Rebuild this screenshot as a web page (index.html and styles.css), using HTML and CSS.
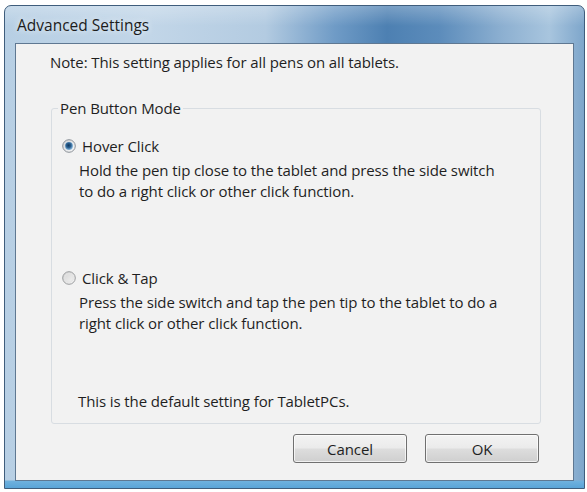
FILE: index.html
```html
<!DOCTYPE html>
<html>
<head>
<meta charset="utf-8">
<link rel="stylesheet" href="styles.css">
</head>
<body>
<div class="window">
  <div class="titlebar"><span class="title">Advanced Settings</span></div>
  <div class="client">
    <p class="note">Note: This setting applies for all pens on all tablets.</p>
    <fieldset class="group">
      <legend class="group-label">Pen Button Mode</legend>
      <div class="group-body">
        <div class="option">
          <div class="option-head">
            <svg class="radio" width="14" height="14" viewBox="0 0 14 14">
              <defs>
                <linearGradient id="rfill1" x1="0" y1="0" x2="1" y2="1">
                  <stop offset="0" stop-color="#cfd3d8"/>
                  <stop offset="1" stop-color="#fafafa"/>
                </linearGradient>
                <radialGradient id="rdot" cx="0.45" cy="0.42" r="0.6">
                  <stop offset="0" stop-color="#0e365d"/>
                  <stop offset="0.5" stop-color="#2a5f90"/>
                  <stop offset="1" stop-color="#8cbde2"/>
                </radialGradient>
              </defs>
              <circle cx="7" cy="7" r="6.3" fill="url(#rfill1)" stroke="#8b9097" stroke-width="1"/>
              <circle cx="7" cy="7" r="3.9" fill="url(#rdot)"/>
            </svg>
            <span class="option-label">Hover Click</span>
          </div>
          <p class="desc">Hold the pen tip close to the tablet and press the side switch<br>to do a right click or other click function.</p>
        </div>
        <div class="option option-next">
          <div class="option-head">
            <svg class="radio" width="14" height="14" viewBox="0 0 14 14">
              <defs>
                <linearGradient id="rfill2" x1="0" y1="0" x2="1" y2="1">
                  <stop offset="0" stop-color="#d2d2d2"/>
                  <stop offset="1" stop-color="#f7f7f7"/>
                </linearGradient>
              </defs>
              <circle cx="7" cy="7" r="6.3" fill="url(#rfill2)" stroke="#9a9c9e" stroke-width="1"/>
              <circle cx="7" cy="7" r="4.2" fill="none" stroke="#e4e4e4" stroke-width="1"/>
            </svg>
            <span class="option-label">Click &amp; Tap</span>
          </div>
          <p class="desc">Press the side switch and tap the pen tip to the tablet to do a<br>right click or other click function.</p>
        </div>
        <p class="default-note">This is the default setting for TabletPCs.</p>
      </div>
    </fieldset>
    <div class="buttons">
      <button class="btn">Cancel</button>
      <button class="btn">OK</button>
    </div>
  </div>
</div>
</body>
</html>
```

FILE: styles.css
```css
html, body {
  margin: 0;
  padding: 0;
  background: #ffffff;
}

body {
  font-family: "Open Sans", "Noto Sans", "Liberation Sans", sans-serif;
  font-size: 15px;
  color: #1f1f1f;
}

.window {
  box-sizing: border-box;
  margin: 5px 0 0 4px;
  width: 581px;
  height: 484px;
  border: 1px solid #3f5d7c;
  border-radius: 7px 7px 0 0;
  padding: 0 10px 7px 10px;
  display: flex;
  flex-direction: column;
  background:
    linear-gradient(to top, #5aa4d7 0, #6fb1de 7px, rgba(111,177,222,0) 8px),
    linear-gradient(to bottom, rgba(255,255,255,0.25) 0, rgba(255,255,255,0) 20px),
    linear-gradient(90deg, #b7cfe4 0%, #c2d6e8 25%, #b3cbe1 45%, #6f9bc6 57%, #4d80b2 66%, #5c8cbb 75%, #8db0d1 86%, #a8c5de 94%, #7ea6cb 100%);
}

.titlebar {
  height: 37px;
  display: flex;
  align-items: center;
  padding-left: 2px;
}

.title {
  font-size: 15.5px;
  color: #1c1c1c;
  text-shadow: 0 0 6px rgba(255,255,255,0.9);
}

.client {
  flex: 1;
  border: 1px solid #5f7892;
  background: #f2f2f2;
  display: flex;
  flex-direction: column;
}

.note {
  margin: 0;
  padding: 8px 0 0 34px;
  line-height: 20px;
  letter-spacing: -0.1px;
}

.group {
  margin: 26px 0 0 35px;
  padding: 0;
  width: 490px;
  box-sizing: border-box;
  border: 1px solid #d8dde2;
  border-radius: 3px;
  min-width: 0;
}

.group-label {
  margin-left: 6px;
  padding: 0 2px;
  line-height: 20px;
  letter-spacing: -0.1px;
}

.group-body {
  padding: 18px 10px 12px 10px;
}

.option-head {
  display: flex;
  align-items: center;
  gap: 6px;
  height: 20px;
}

.radio {
  display: block;
  flex: none;
}

.option-label {
  line-height: 20px;
  letter-spacing: -0.1px;
}

.desc {
  margin: 4px 0 0 17px;
  line-height: 21px;
  letter-spacing: -0.1px;
}

.option-next {
  margin-top: 66px;
}

.default-note {
  margin: 57px 0 0 16px;
  line-height: 20px;
  letter-spacing: -0.1px;
}

.buttons {
  margin-top: 10px;
  display: flex;
  justify-content: flex-end;
  gap: 18px;
  padding-right: 34px;
}

.btn {
  box-sizing: border-box;
  width: 114px;
  height: 29px;
  border: 1px solid #707070;
  border-radius: 3px;
  background: linear-gradient(to bottom, #f3f3f3 0%, #ebebeb 48%, #dddddd 52%, #cfcfcf 100%);
  box-shadow: inset 0 0 0 1px rgba(255,255,255,0.7);
  font-family: "Open Sans", "Noto Sans", "Liberation Sans", sans-serif;
  font-size: 15px;
  color: #1f1f1f;
  letter-spacing: -0.1px;
  padding: 0;
}
```
